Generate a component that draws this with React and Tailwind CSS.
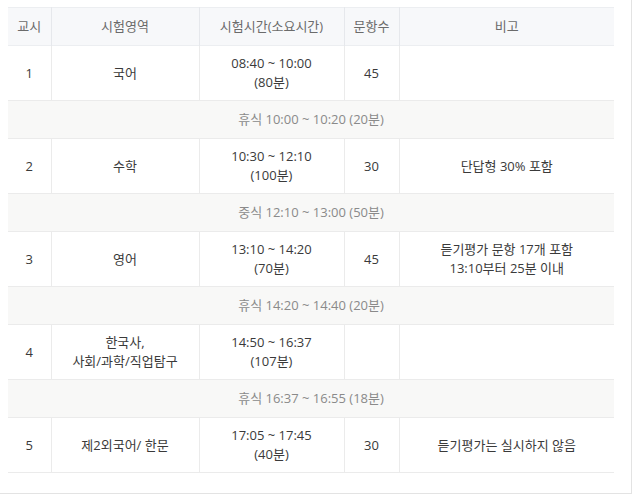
import React from "react";

const rows = [
  { type: "exam", no: "1", subject: ["국어"], time: "08:40 ~ 10:00", dur: "(80분)", count: "45", note: [] },
  { type: "break", text: "휴식 10:00 ~ 10:20 (20분)" },
  { type: "exam", no: "2", subject: ["수학"], time: "10:30 ~ 12:10", dur: "(100분)", count: "30", note: ["단답형 30% 포함"] },
  { type: "break", text: "중식 12:10 ~ 13:00 (50분)" },
  { type: "exam", no: "3", subject: ["영어"], time: "13:10 ~ 14:20", dur: "(70분)", count: "45", note: ["듣기평가 문항 17개 포함", "13:10부터 25분 이내"] },
  { type: "break", text: "휴식 14:20 ~ 14:40 (20분)" },
  { type: "exam", no: "4", subject: ["한국사,", "사회/과학/직업탐구"], time: "14:50 ~ 16:37", dur: "(107분)", count: "", note: [] },
  { type: "break", text: "휴식 16:37 ~ 16:55 (18분)" },
  { type: "exam", no: "5", subject: ["제2외국어/ 한문"], time: "17:05 ~ 17:45", dur: "(40분)", count: "30", note: ["듣기평가는 실시하지 않음"] },
];

export default function App() {
  return (
    <div
      className="w-[640px] h-[503px] bg-white overflow-hidden"
      style={{ fontFamily: '"Open Sans", "Noto Sans CJK KR", sans-serif' }}
    >
      <div className="w-[632px] h-[494px] border-r border-b border-[#e3e3e3] pt-[7px] pl-[8px]">
        <table className="w-[606px] border-collapse table-fixed text-[13px] leading-[19px] text-center">
          <colgroup>
            <col className="w-[43px]" />
            <col className="w-[148px]" />
            <col className="w-[145px]" />
            <col className="w-[55px]" />
            <col />
          </colgroup>
          <thead>
            <tr className="h-[38px] bg-[#f7f8fa] text-[#6b6b6b] border-t border-b border-[#eceef1]">
              <th className="font-normal">교시</th>
              <th className="font-normal border-l border-[#e6e8ec]">시험영역</th>
              <th className="font-normal border-l border-[#e6e8ec]">시험시간(소요시간)</th>
              <th className="font-normal border-l border-[#e6e8ec]">문항수</th>
              <th className="font-normal border-l border-[#e6e8ec]">비고</th>
            </tr>
          </thead>
          <tbody className="text-[#3a3a3a]">
            {rows.map((r, i) =>
              r.type === "break" ? (
                <tr key={i} className="h-[38px] bg-[#f8f8f7] border-b border-[#ebebeb]">
                  <td colSpan={5} className="text-[#8a8a8a]">{r.text}</td>
                </tr>
              ) : (
                <tr key={i} className="h-[55px] border-b border-[#ebebeb]">
                  <td>{r.no}</td>
                  <td className="border-l border-[#ebebeb]">
                    {r.subject.map((s, j) => (
                      <div key={j}>{s}</div>
                    ))}
                  </td>
                  <td className="border-l border-[#ebebeb]">
                    <div>{r.time}</div>
                    <div>{r.dur}</div>
                  </td>
                  <td className="border-l border-[#ebebeb]">{r.count}</td>
                  <td className="border-l border-[#ebebeb]">
                    {r.note.map((s, j) => (
                      <div key={j}>{s}</div>
                    ))}
                  </td>
                </tr>
              )
            )}
          </tbody>
        </table>
      </div>
    </div>
  );
}
